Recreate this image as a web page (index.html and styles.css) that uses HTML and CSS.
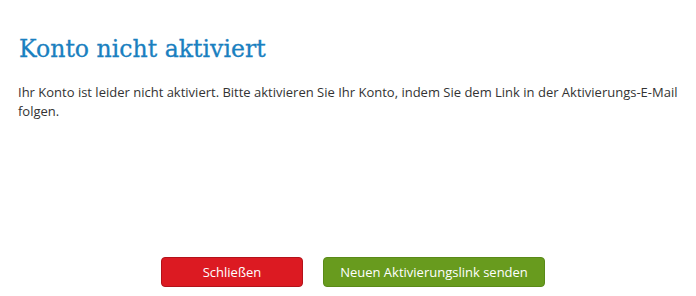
FILE: index.html
```html
<!DOCTYPE html>
<html lang="de">
<head>
<meta charset="utf-8">
<title>Konto nicht aktiviert</title>
<link rel="stylesheet" href="styles.css">
</head>
<body>
<div class="page">
  <h1 class="title">Konto nicht aktiviert</h1>
  <p class="message">Ihr Konto ist leider nicht aktiviert. Bitte aktivieren Sie Ihr Konto, indem Sie dem Link in der Aktivierungs-E-Mail folgen.</p>
  <div class="actions">
    <button class="btn btn-close" type="button">Schließen</button>
    <button class="btn btn-send" type="button">Neuen Aktivierungslink senden</button>
  </div>
</div>
</body>
</html>
```
FILE: styles.css
```css
html, body {
  margin: 0;
  padding: 0;
  background: #ffffff;
}
.page {
  box-sizing: border-box;
  height: 296px;
  padding: 0 18px 9px 18px;
  display: flex;
  flex-direction: column;
  font-family: "Open Sans", "Liberation Sans", sans-serif;
  color: #333333;
}
.title {
  margin: 34px 0 0 1px;
  font-family: "DejaVu Serif", serif;
  font-weight: normal;
  font-size: 23.6px;
  line-height: 30px;
  color: #1a80c0;
  -webkit-text-stroke: 0.3px #1a80c0;
}
.message {
  margin: 19px 0 0 0;
  font-size: 13px;
  line-height: 18.6px;
}
.actions {
  margin-top: auto;
  display: flex;
  justify-content: center;
  gap: 20px;
  padding-left: 10px;
}
.btn {
  box-sizing: border-box;
  height: 30px;
  border-radius: 4px;
  font-family: "Open Sans", "Liberation Sans", sans-serif;
  font-size: 13px;
  color: #ffffff;
  padding: 0;
  cursor: pointer;
}
.btn-close {
  width: 142px;
  background: #dc1a22;
  border: 1px solid #b3121a;
}
.btn-send {
  width: 222px;
  background: #689b1e;
  border: 1px solid #5a8a18;
}
```
